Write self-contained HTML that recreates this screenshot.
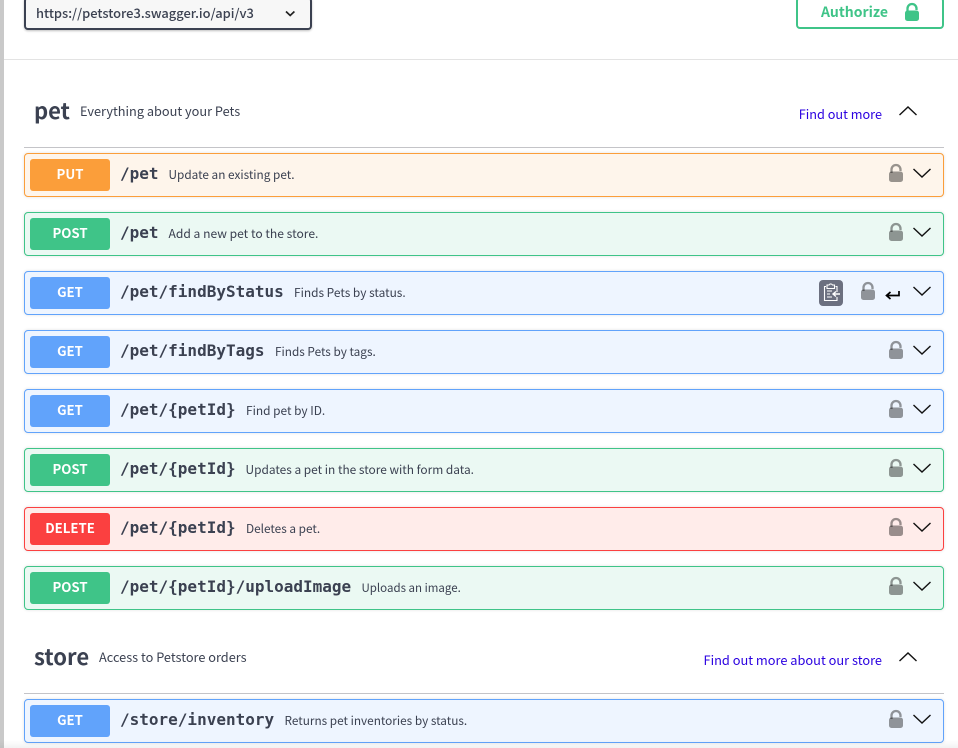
<!DOCTYPE html>
<html><head><meta charset="utf-8"><style>
html,body{margin:0;padding:0;background:#fff;width:958px;height:748px;overflow:hidden}
body{position:relative;font-family:"Liberation Sans","Noto Sans CJK KR",sans-serif;color:#3b4151}
body *{font-family:"Noto Sans CJK KR","Liberation Sans",sans-serif}
.abs{position:absolute;white-space:nowrap}
.row{position:absolute;left:24px;width:918px;height:42px;border:1px solid;border-radius:4px;box-shadow:0 0 3px rgba(0,0,0,.12)}
.m{position:absolute;left:5px;top:5px;width:80px;height:32px;line-height:29px;border-radius:3px;color:#fff;font-size:13.2px;font-weight:700;text-align:center}
.p{position:absolute;left:95px;top:9px;line-height:22px;font-family:"DejaVu Sans Mono",monospace!important;font-weight:700;font-size:16px;color:#3b4151;white-space:nowrap}
.d{position:absolute;top:11px;line-height:20px;font-size:11.8px;color:#3b4151;white-space:nowrap}
svg{position:absolute;overflow:visible}
.put{background:#fef5eb;border-color:#fb9e3a}.put .m{background:#fb9e3a}
.post{background:#ebf9f3;border-color:#3fc488}.post .m{background:#3fc488}
.get{background:#eef5ff;border-color:#61a3fb}.get .m{background:#61a3fb}
.del{background:#ffecea;border-color:#fb4040}.del .m{background:#fb4040}
</style></head><body>
<div class="abs" style="left:0;top:0;width:4px;height:748px;background:#c9c9c9"></div>
<div class="abs" style="left:4px;top:59px;width:954px;height:1px;background:#e3e3e3"></div>

<div class="abs" style="left:24px;top:-3px;width:284px;height:29px;border:2px solid #3b4151;border-radius:4px;background:#f7f7f7;box-shadow:0 1px 2px rgba(0,0,0,.25)"></div>
<div class="abs" style="left:36px;top:3px;line-height:20px;font-size:12.9px;font-weight:500;color:#3b4151">https://petstore3.swagger.io/api/v3</div>
<svg style="left:285px;top:10px" width="11" height="8"><path d="M1 1.5 L5.2 5.5 L9.4 1.5" fill="none" stroke="#222" stroke-width="1.7"/></svg>

<div class="abs" style="left:796px;top:-3px;width:144px;height:28px;border:2px solid #3fc488;border-radius:4px;background:#fff"></div>
<div class="abs" style="left:821px;top:2px;line-height:20px;font-size:14px;font-weight:700;color:#3fc488">Authorize</div>
<svg style="left:905px;top:3px" width="15" height="18"><path d="M2.5 8V5.5a4.5 4.5 0 0 1 9 0V7" fill="none" stroke="#3fc488" stroke-width="2.3"/><rect x="0" y="7.5" width="14" height="10.5" rx="2.5" fill="#3fc488"/></svg>

<div class="abs" style="left:34px;top:94px;line-height:32px;font-size:22px;font-weight:700;color:#3b4151">pet</div>
<div class="abs" style="left:80px;top:101px;line-height:20px;font-size:12.75px;color:#3b4151">Everything about your Pets</div>
<div class="abs" style="right:76px;top:104px;line-height:20px;font-size:12.7px;color:#2a00e0">Find out more</div>
<svg style="left:899px;top:106px" width="18" height="10"><path d="M0.5 9 L9 1 L17.5 9" fill="none" stroke="#111" stroke-width="1.4"/></svg>
<div class="abs" style="left:24px;top:147px;width:920px;height:1px;background:#c4c4c8"></div>

<div class="row put" style="top:153px"><div class="m">PUT</div><div class="p">/pet</div><div class="d" style="left:143.5px">Update an existing pet.</div>
<svg style="left:864px;top:10px" width="15" height="19"><path d="M2.5 9V5.5a4.5 4.5 0 0 1 9 0V7" fill="none" stroke="#000" stroke-opacity=".4" stroke-width="2.3"/><rect x="0" y="7.5" width="14" height="10.5" rx="2.5" fill="#000" fill-opacity=".4"/></svg>
<svg style="left:888px;top:14px" width="18" height="10"><path d="M0.5 1 L9 9 L17.5 1" fill="none" stroke="#111" stroke-width="1.4"/></svg></div>

<div class="row post" style="top:212px"><div class="m">POST</div><div class="p">/pet</div><div class="d" style="left:143.5px;font-size:12.1px">Add a new pet to the store.</div>
<svg style="left:864px;top:10px" width="15" height="19"><path d="M2.5 9V5.5a4.5 4.5 0 0 1 9 0V7" fill="none" stroke="#000" stroke-opacity=".4" stroke-width="2.3"/><rect x="0" y="7.5" width="14" height="10.5" rx="2.5" fill="#000" fill-opacity=".4"/></svg>
<svg style="left:888px;top:14px" width="18" height="10"><path d="M0.5 1 L9 9 L17.5 1" fill="none" stroke="#111" stroke-width="1.4"/></svg></div>

<div class="row get" style="top:271px"><div class="m">GET</div><div class="p">/pet/findByStatus</div><div class="d" style="left:269px;font-size:11.9px">Finds Pets by status.</div>
<svg style="left:794px;top:8px" width="24" height="26"><rect x="0" y="0" width="24" height="26" rx="4" fill="#6c7080"/><path d="M7 6.5H5.5V20.5H18V17M18 12V6.5H16.5M8 5H10a2 2 0 0 1 3.5 0H15.5V8.5H8Z" fill="none" stroke="#fff" stroke-width="1.1"/><path d="M8 11H13M8 14H11M8 17H13" stroke="#fff" stroke-width="1.1"/><path d="M21 14H14.5M17 11.5L14 14L17 16.5" fill="none" stroke="#fff" stroke-width="1.4"/></svg>
<svg style="left:836px;top:10px" width="15" height="19"><path d="M2.5 9V5.5a4.5 4.5 0 0 1 9 0V7" fill="none" stroke="#000" stroke-opacity=".4" stroke-width="2.3"/><rect x="0" y="7.5" width="14" height="10.5" rx="2.5" fill="#000" fill-opacity=".4"/></svg>
<svg style="left:860px;top:18px" width="16" height="12"><path d="M14 1V5.5H1.5M5.5 2L1.5 5.5L5.5 9" fill="none" stroke="#000" stroke-width="1.7"/></svg>
<svg style="left:888px;top:14px" width="18" height="10"><path d="M0.5 1 L9 9 L17.5 1" fill="none" stroke="#111" stroke-width="1.4"/></svg></div>

<div class="row get" style="top:330px"><div class="m">GET</div><div class="p">/pet/findByTags</div><div class="d" style="left:250px">Finds Pets by tags.</div>
<svg style="left:864px;top:10px" width="15" height="19"><path d="M2.5 9V5.5a4.5 4.5 0 0 1 9 0V7" fill="none" stroke="#000" stroke-opacity=".4" stroke-width="2.3"/><rect x="0" y="7.5" width="14" height="10.5" rx="2.5" fill="#000" fill-opacity=".4"/></svg>
<svg style="left:888px;top:14px" width="18" height="10"><path d="M0.5 1 L9 9 L17.5 1" fill="none" stroke="#111" stroke-width="1.4"/></svg></div>

<div class="row get" style="top:389px"><div class="m">GET</div><div class="p">/pet/{petId}</div><div class="d" style="left:221px;font-size:11.9px">Find pet by ID.</div>
<svg style="left:864px;top:10px" width="15" height="19"><path d="M2.5 9V5.5a4.5 4.5 0 0 1 9 0V7" fill="none" stroke="#000" stroke-opacity=".4" stroke-width="2.3"/><rect x="0" y="7.5" width="14" height="10.5" rx="2.5" fill="#000" fill-opacity=".4"/></svg>
<svg style="left:888px;top:14px" width="18" height="10"><path d="M0.5 1 L9 9 L17.5 1" fill="none" stroke="#111" stroke-width="1.4"/></svg></div>

<div class="row post" style="top:448px"><div class="m">POST</div><div class="p">/pet/{petId}</div><div class="d" style="left:220.5px;font-size:11.9px">Updates a pet in the store with form data.</div>
<svg style="left:864px;top:10px" width="15" height="19"><path d="M2.5 9V5.5a4.5 4.5 0 0 1 9 0V7" fill="none" stroke="#000" stroke-opacity=".4" stroke-width="2.3"/><rect x="0" y="7.5" width="14" height="10.5" rx="2.5" fill="#000" fill-opacity=".4"/></svg>
<svg style="left:888px;top:14px" width="18" height="10"><path d="M0.5 1 L9 9 L17.5 1" fill="none" stroke="#111" stroke-width="1.4"/></svg></div>

<div class="row del" style="top:507px"><div class="m">DELETE</div><div class="p">/pet/{petId}</div><div class="d" style="left:221px">Deletes a pet.</div>
<svg style="left:864px;top:10px" width="15" height="19"><path d="M2.5 9V5.5a4.5 4.5 0 0 1 9 0V7" fill="none" stroke="#000" stroke-opacity=".4" stroke-width="2.3"/><rect x="0" y="7.5" width="14" height="10.5" rx="2.5" fill="#000" fill-opacity=".4"/></svg>
<svg style="left:888px;top:14px" width="18" height="10"><path d="M0.5 1 L9 9 L17.5 1" fill="none" stroke="#111" stroke-width="1.4"/></svg></div>

<div class="row post" style="top:566px"><div class="m">POST</div><div class="p">/pet/{petId}/uploadImage</div><div class="d" style="left:336.5px;font-size:11.5px">Uploads an image.</div>
<svg style="left:864px;top:10px" width="15" height="19"><path d="M2.5 9V5.5a4.5 4.5 0 0 1 9 0V7" fill="none" stroke="#000" stroke-opacity=".4" stroke-width="2.3"/><rect x="0" y="7.5" width="14" height="10.5" rx="2.5" fill="#000" fill-opacity=".4"/></svg>
<svg style="left:888px;top:14px" width="18" height="10"><path d="M0.5 1 L9 9 L17.5 1" fill="none" stroke="#111" stroke-width="1.4"/></svg></div>

<div class="abs" style="left:34px;top:640px;line-height:32px;font-size:22px;font-weight:700;color:#3b4151">store</div>
<div class="abs" style="left:99px;top:647px;line-height:20px;font-size:12.75px;color:#3b4151">Access to Petstore orders</div>
<div class="abs" style="right:76px;top:650px;line-height:20px;font-size:12.8px;color:#2a00e0">Find out more about our store</div>
<svg style="left:899px;top:652px" width="18" height="10"><path d="M0.5 9 L9 1 L17.5 9" fill="none" stroke="#111" stroke-width="1.4"/></svg>
<div class="abs" style="left:24px;top:693px;width:920px;height:1px;background:#c4c4c8"></div>

<div class="row get" style="top:699px"><div class="m">GET</div><div class="p">/store/inventory</div><div class="d" style="left:259.5px">Returns pet inventories by status.</div>
<svg style="left:864px;top:10px" width="15" height="19"><path d="M2.5 9V5.5a4.5 4.5 0 0 1 9 0V7" fill="none" stroke="#000" stroke-opacity=".4" stroke-width="2.3"/><rect x="0" y="7.5" width="14" height="10.5" rx="2.5" fill="#000" fill-opacity=".4"/></svg>
<svg style="left:888px;top:14px" width="18" height="10"><path d="M0.5 1 L9 9 L17.5 1" fill="none" stroke="#111" stroke-width="1.4"/></svg></div>
<div class="abs" style="left:0;top:740px;width:958px;height:8px;background:linear-gradient(to bottom,rgba(0,0,0,0),rgba(0,0,0,.05))"></div>
</body></html>
